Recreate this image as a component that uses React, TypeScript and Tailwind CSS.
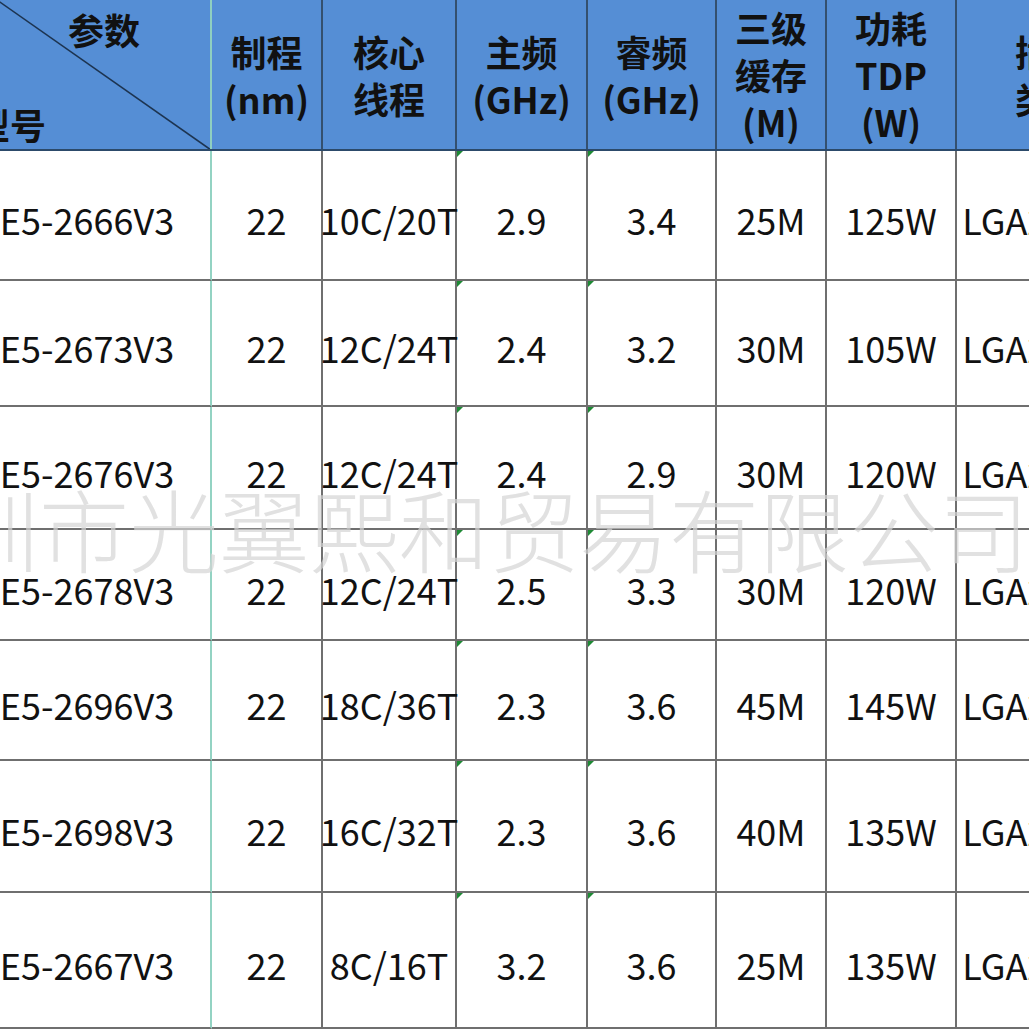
import React from "react";

type Row = { cells: string[]; h: string };

const rows: Row[] = [
  { cells: ["E5-2666V3", "22", "10C/20T", "2.9", "3.4", "25M", "125W", "LGA2011-3"], h: "h-[130px]" },
  { cells: ["E5-2673V3", "22", "12C/24T", "2.4", "3.2", "30M", "105W", "LGA2011-3"], h: "h-[126px]" },
  { cells: ["E5-2676V3", "22", "12C/24T", "2.4", "2.9", "30M", "120W", "LGA2011-3"], h: "h-[123px]" },
  { cells: ["E5-2678V3", "22", "12C/24T", "2.5", "3.3", "30M", "120W", "LGA2011-3"], h: "h-[111px]" },
  { cells: ["E5-2696V3", "22", "18C/36T", "2.3", "3.6", "45M", "145W", "LGA2011-3"], h: "h-[120px]" },
  { cells: ["E5-2698V3", "22", "16C/32T", "2.3", "3.6", "40M", "135W", "LGA2011-3"], h: "h-[132px]" },
  { cells: ["E5-2667V3", "22", "8C/16T", "3.2", "3.6", "25M", "135W", "LGA2011-3"], h: "h-[136px]" },
];

const headers: string[][] = [
  ["制程", "(nm)"],
  ["核心", "线程"],
  ["主频", "(GHz)"],
  ["睿频", "(GHz)"],
  ["三级", "缓存", "(M)"],
  ["功耗", "TDP", "(W)"],
  ["插槽", "类型"],
];

const cols = "grid grid-cols-[248px_111px_134px_131px_129px_110px_130px_190px]";

function GreenMark() {
  return (
    <span className="absolute left-0 top-0 w-0 h-0 border-t-[6px] border-t-[#1e8a35] border-r-[6px] border-r-transparent" />
  );
}

export default function App() {
  return (
    <div className="relative w-[1029px] h-[1029px] overflow-hidden bg-white font-['Noto_Sans_CJK_SC',sans-serif] text-[#111]">
      <div className="ml-[-36px] w-[1183px]">
        {/* header */}
        <div className={`${cols} h-[151px] bg-[#558ed5] border-b-2 border-[#2c4a6a]`}>
          <div className="relative flex flex-col justify-between border-r-2 border-[#8fcfc0]">
            <svg className="absolute inset-0" width="246" height="149" viewBox="0 0 246 149">
              <line x1="33" y1="0" x2="247" y2="150" stroke="#1d3450" strokeWidth="1.6" />
            </svg>
            <div className="relative ml-[104px] mt-[6px] text-[36px] font-bold leading-[47px]">参数</div>
            <div className="relative ml-[10px] mb-[1px] text-[36px] font-bold leading-[47px]">型号</div>
          </div>
          {headers.map((lines, i) => (
            <div
              key={i}
              className="flex flex-col items-center justify-center border-r-2 border-[#34506e] text-[36px] font-bold leading-[47px] whitespace-nowrap"
            >
              {lines.map((l, j) => (
                <span key={j}>{l}</span>
              ))}
            </div>
          ))}
        </div>
        {/* body */}
        {rows.map((r, ri) => (
          <div key={ri} className={`${cols} ${r.h}`}>
            {r.cells.map((c, ci) => (
              <div
                key={ci}
                className={`relative flex items-center justify-center pt-[8px] border-b-2 border-[#6f6f6f] text-[36px] leading-none whitespace-nowrap ${
                  ci === 0 ? "border-r-2 border-r-[#93d3c3]" : "border-r-2 border-r-[#6f6f6f]"
                }`}
              >
                {(ci === 3 || ci === 4) && <GreenMark />}
                {c}
              </div>
            ))}
          </div>
        ))}
      </div>
      {/* watermark */}
      <div className="pointer-events-none absolute left-[-141px] top-[482px] whitespace-nowrap text-[90px] leading-none font-light text-[#d4d4d4]/70">
        深圳市光翼熙和贸易有限公司
      </div>
    </div>
  );
}
